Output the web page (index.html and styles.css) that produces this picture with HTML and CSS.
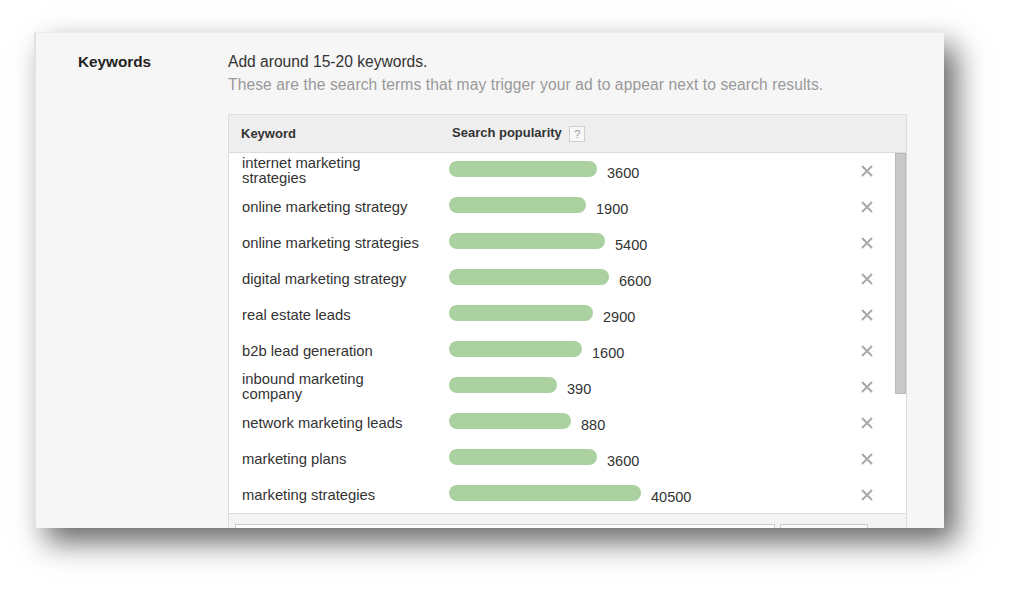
FILE: index.html
```html
<!DOCTYPE html>
<html lang="en">
  <head>
    <meta charset="UTF-8" />
    <title>Keywords</title>
    <link rel="stylesheet" href="styles.css">
  </head>
  <body>
    <div class="panel">
      <section class="felt">
        <h2 class="label">Keywords</h2>

        <div class="indhold">
          <p class="intro">Add around 15-20 keywords.</p>
          <p class="hint">These are the search terms that may trigger your ad to appear next to search results.</p>

          <div class="tabel">
            <div class="hoved">
              <span>Keyword</span>
              <span>Search popularity <i class="hjaelp">?</i></span>
            </div>

            <div class="krop">
              <div class="raekker">
                <div class="raekke">
                  <span class="ord">internet marketing strategies</span>
                  <span class="pop"><b class="bar" style="width:148px"></b><em>3600</em></span>
                  <span class="fjern"><svg width="12" height="12" viewBox="0 0 12 12"><path d="M1 1L11 11M11 1L1 11" /></svg></span>
                </div>
                <div class="raekke">
                  <span class="ord">online marketing strategy</span>
                  <span class="pop"><b class="bar" style="width:137px"></b><em>1900</em></span>
                  <span class="fjern"><svg width="12" height="12" viewBox="0 0 12 12"><path d="M1 1L11 11M11 1L1 11" /></svg></span>
                </div>
                <div class="raekke">
                  <span class="ord">online marketing strategies</span>
                  <span class="pop"><b class="bar" style="width:156px"></b><em>5400</em></span>
                  <span class="fjern"><svg width="12" height="12" viewBox="0 0 12 12"><path d="M1 1L11 11M11 1L1 11" /></svg></span>
                </div>
                <div class="raekke">
                  <span class="ord">digital marketing strategy</span>
                  <span class="pop"><b class="bar" style="width:160px"></b><em>6600</em></span>
                  <span class="fjern"><svg width="12" height="12" viewBox="0 0 12 12"><path d="M1 1L11 11M11 1L1 11" /></svg></span>
                </div>
                <div class="raekke">
                  <span class="ord">real estate leads</span>
                  <span class="pop"><b class="bar" style="width:144px"></b><em>2900</em></span>
                  <span class="fjern"><svg width="12" height="12" viewBox="0 0 12 12"><path d="M1 1L11 11M11 1L1 11" /></svg></span>
                </div>
                <div class="raekke">
                  <span class="ord">b2b lead generation</span>
                  <span class="pop"><b class="bar" style="width:133px"></b><em>1600</em></span>
                  <span class="fjern"><svg width="12" height="12" viewBox="0 0 12 12"><path d="M1 1L11 11M11 1L1 11" /></svg></span>
                </div>
                <div class="raekke">
                  <span class="ord">inbound marketing company</span>
                  <span class="pop"><b class="bar" style="width:108px"></b><em>390</em></span>
                  <span class="fjern"><svg width="12" height="12" viewBox="0 0 12 12"><path d="M1 1L11 11M11 1L1 11" /></svg></span>
                </div>
                <div class="raekke">
                  <span class="ord">network marketing leads</span>
                  <span class="pop"><b class="bar" style="width:122px"></b><em>880</em></span>
                  <span class="fjern"><svg width="12" height="12" viewBox="0 0 12 12"><path d="M1 1L11 11M11 1L1 11" /></svg></span>
                </div>
                <div class="raekke">
                  <span class="ord">marketing plans</span>
                  <span class="pop"><b class="bar" style="width:148px"></b><em>3600</em></span>
                  <span class="fjern"><svg width="12" height="12" viewBox="0 0 12 12"><path d="M1 1L11 11M11 1L1 11" /></svg></span>
                </div>
                <div class="raekke">
                  <span class="ord">marketing strategies</span>
                  <span class="pop"><b class="bar" style="width:192px"></b><em>40500</em></span>
                  <span class="fjern"><svg width="12" height="12" viewBox="0 0 12 12"><path d="M1 1L11 11M11 1L1 11" /></svg></span>
                </div>
              </div>

              <div class="rullebar"><div class="greb"></div></div>
            </div>

            <div class="fod">
              <input class="felt-input" type="text" />
              <button class="tilfoej"></button>
            </div>
          </div>
        </div>
      </section>
    </div>
  </body>
</html>
```

FILE: styles.css
```css
* {
  box-sizing: border-box;
}

html,
body {
  height: 100%;
}

body {
  margin: 0;
  padding: 32px 0 0 34px;
  background: #fff;
  font-family: "Liberation Sans", Arial, sans-serif;
  color: #333;
}

.panel {
  width: 910px;
  height: 496px;
  overflow: hidden;
  background: #f6f6f6;
  border-top: 1px solid #ececec;
  border-left: 2px solid #e2e2e2;
  box-shadow: 12px 14px 28px rgba(0, 0, 0, 0.6);
}

.felt {
  display: grid;
  grid-template-columns: 150px 679px;
  padding: 18px 0 0 42px;
}

.label {
  margin: 0;
  font-size: 15.3px;
  line-height: 22px;
  font-weight: bold;
  color: #222;
}

.intro,
.hint {
  margin: 0;
  font-size: 15.6px;
  line-height: 21px;
}

.hint {
  color: #999;
  letter-spacing: 0.1px;
  margin: 2px 0 19px;
}

.tabel {
  border: 1px solid #dcdcdc;
  border-bottom: none;
  background: #fff;
}

.hoved {
  display: grid;
  grid-template-columns: 211px 1fr;
  align-items: center;
  height: 38px;
  padding-left: 12px;
  background: #eeeeee;
  border-bottom: 1px solid #dcdcdc;
  font-size: 13px;
  font-weight: bold;
  color: #333;
}

.hjaelp {
  display: inline-block;
  width: 16px;
  height: 16px;
  margin-left: 4px;
  border: 1px solid #cfcfcf;
  background: #f7f7f7;
  color: #999;
  font-style: normal;
  font-weight: normal;
  font-size: 11px;
  line-height: 14px;
  text-align: center;
  vertical-align: middle;
}

.krop {
  display: flex;
}

.raekker {
  flex: 1;
}

.raekke {
  display: grid;
  grid-template-columns: 207px 1fr 24px;
  align-items: center;
  height: 36px;
  padding: 0 16px 0 13px;
  font-size: 14.8px;
}

.ord {
  max-width: 181px;
  line-height: 15px;
}

.pop {
  display: flex;
  align-items: center;
}

.bar {
  display: block;
  height: 16px;
  margin-bottom: 4px;
  border-radius: 8px;
  background: #abd1a0;
}

.pop em {
  font-style: normal;
  font-size: 14.5px;
  margin: 3px 0 0 10px;
}

.fjern {
  display: flex;
  justify-content: center;
}

.fjern path {
  stroke: #a9a9a9;
  stroke-width: 2;
}

.rullebar {
  width: 11px;
}

.greb {
  height: 241px;
  background: #c9c9c9;
  border: 1px solid #b9b9b9;
}

.fod {
  display: flex;
  gap: 5px;
  padding: 10px 6px;
  border-top: 1px solid #dcdcdc;
  background: #f4f4f4;
}

.felt-input {
  width: 540px;
  height: 28px;
  border: 1px solid #cccccc;
  background: #fff;
}

.tilfoej {
  width: 88px;
  height: 28px;
  border: 1px solid #cccccc;
  background: #fafafa;
}
```
